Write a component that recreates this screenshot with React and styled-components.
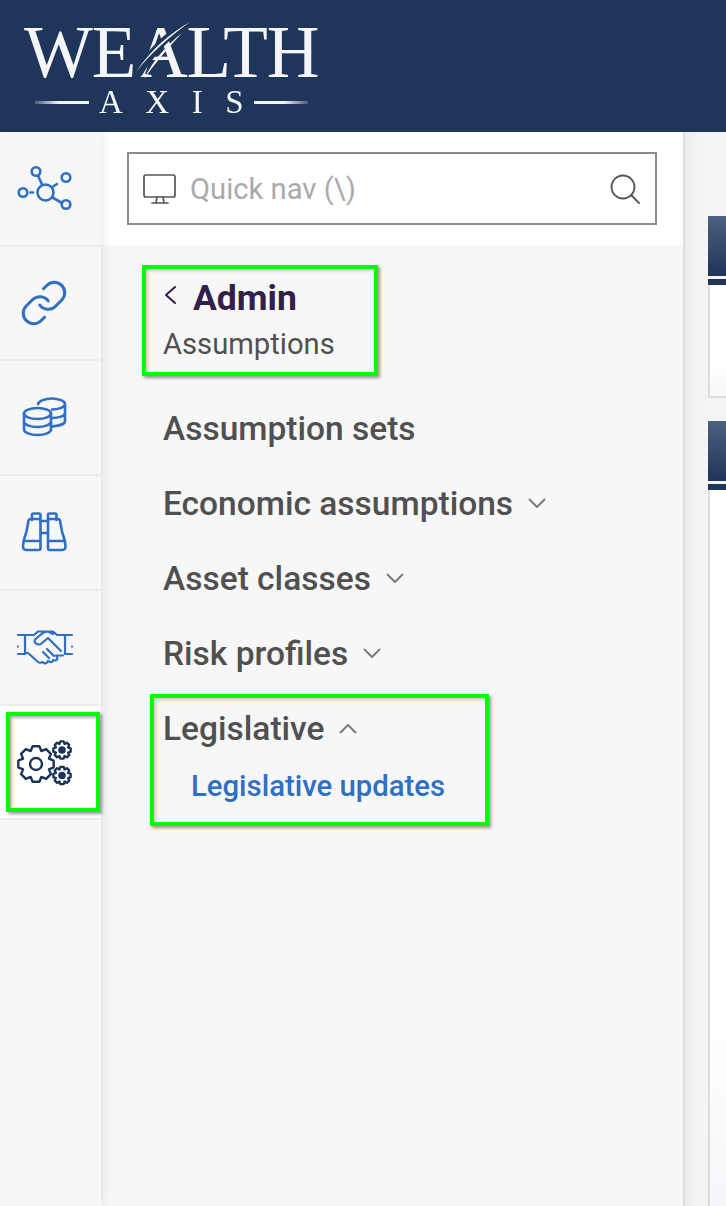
import React from "react";
import styled, { createGlobalStyle } from "styled-components";
import { Link as LinkIcon } from "lucide-react";

const Global = createGlobalStyle`
  html, body { margin: 0; padding: 0; height: 100%; }
  body { font-family: Roboto, "Liberation Sans", sans-serif; background: #f4f4f4; overflow: hidden; }
  #root { height: 100%; }
  * { box-sizing: border-box; }
`;

const Page = styled.div`
  width: 726px; height: 1206px; display: flex; flex-direction: column; overflow: hidden;
`;
const Header = styled.header`
  height: 132px; flex: none; background: #1f3559; padding: 16px 0 0 24px;
`;
const Logo = styled.div`
  position: relative; width: 292px; color: #f4f6f9; font-family: "Liberation Serif", serif; filter: blur(0.45px);
`;
const LogoWord = styled.div`
  font-size: 73px; line-height: 74px; height: 71px; white-space: nowrap; letter-spacing: -1.2px;
`;
const LogoSub = styled.div`
  display: flex; align-items: center; margin: 0 0 0 11px; height: 30px; gap: 10px;
`;
const LogoRule = styled.span`
  width: 54px; height: 3px; background: linear-gradient(${p => p.$dir}, #f4f6f9 55%, rgba(244,246,249,0.2));
`;
const LogoAxis = styled.span`
  font-size: 33px; line-height: 30px; letter-spacing: 22.5px; margin-right: -22.5px;
`;
const Swoosh = styled.svg`
  position: absolute; left: 100px; top: 0; width: 80px; height: 70px;
`;
const Body = styled.div`
  flex: 1; display: flex; min-height: 0;
`;
const Rail = styled.nav`
  width: 101px; flex: none; background: #f7f7f7; box-shadow: 3px 0 8px rgba(0,0,0,0.07); position: relative; z-index: 2;
`;
const RailItem = styled.div`
  height: ${p => p.$h}px; display: flex; align-items: center; padding-left: 15px;
  border-bottom: 2px solid #ededed; background: ${p => (p.$active ? "#fff" : "#f7f7f7")};
`;
const ActiveFrame = styled.div`
  width: 94px; height: 100px; margin-left: -9px; border: 4px solid #00ff00; padding-left: 5px;
  display: flex; align-items: center; box-shadow: 2px 2px 3px rgba(0,0,0,0.4), inset 2px 2px 3px rgba(0,0,0,0.3);
`;
const Panel = styled.aside`
  width: 584px; flex: none; background: #f7f7f7; border-right: 2px solid #dedede; position: relative; z-index: 1;
`;
const SearchBar = styled.div`
  height: 113px; background: #fff; padding: 20px 26px 0;
`;
const SearchBox = styled.div`
  width: 530px; height: 73px; border: 2px solid #8c8c8c; display: flex; align-items: center; padding: 0 15px 0 14px;
`;
const Placeholder = styled.span`
  flex: 1; margin-left: 13px; font-size: 29.2px; color: #aaaaaa;
`;
const NavList = styled.div`
  padding: 20px 0 0 41px;
`;
const Frame = styled.div`
  border: 4px solid #00ff00; box-shadow: 2px 2px 3px rgba(0,0,0,0.4), inset 2px 2px 3px rgba(0,0,0,0.18);
  width: ${p => p.$w}px; height: ${p => p.$h}px; margin-left: ${p => p.$ml || 0}px; padding-left: ${p => p.$pl}px;
`;
const TitleRow = styled.div`
  display: flex; align-items: center; height: 50px; margin-top: 4px; color: #33204a;
`;
const Title = styled.span`
  font-weight: 700; font-size: 35.5px; margin-left: 16px;
`;
const Subtitle = styled.div`
  font-size: 29.2px; color: #505050; line-height: 34px; margin-top: 4px;
`;
const Items = styled.div`
  padding: 15px 0 0 21px; height: 318px;
`;
const Item = styled.div`
  height: 75px; display: flex; align-items: center; font-size: 33.5px; font-weight: 500; color: #505050; gap: 15px;
`;
const FrameHead = styled(Item)`
  height: 60px;
`;
const SubLink = styled.div`
  font-size: 29.3px; font-weight: 500; color: #2f6fc4; margin: 8px 0 0 28px; line-height: 40px;
`;
const Content = styled.main`
  flex: 1; padding: 84px 0 0 23px; background: linear-gradient(90deg, #ececec, #f4f4f4 14px);
`;
const Card = styled.section`
  width: 100%; margin-bottom: 23px;
`;
const CardHead = styled.div`
  height: 60px; background: linear-gradient(#4c6080, #1f3559);
`;
const CardStrip = styled.div`
  height: 6px; margin-top: 3px; background: #1f3559;
`;
const CardBody = styled.div`
  height: ${p => p.$h}px; background: linear-gradient(#fff 75%, #f6f7fa); border-left: 2px solid #dcdcdc;
  border-bottom: ${p => (p.$open ? 0 : "2px solid #dcdcdc")};
`;

const BLUE = "#2f6fc4";
const NAVY = "#1c3358";

const IconSvg = styled.svg`
  width: 60px; height: 60px; flex: none; fill: none; stroke: ${p => p.$c || BLUE}; stroke-width: ${p => p.$sw || 2.6};
  stroke-linecap: round; stroke-linejoin: round;
`;
const Caret = styled.svg`
  flex: none; width: ${p => p.$w}px; height: ${p => p.$h}px; fill: none; stroke: ${p => p.$c}; stroke-width: ${p => p.$sw};
  stroke-linecap: round; stroke-linejoin: round; margin-top: ${p => p.$mt || 0}px;
`;
const CaretDown = () => (
  <Caret viewBox="0 0 18 11" $w={18} $h={11} $c="#777" $sw="1.800"><path d="M1.500 1.500 9 9l7.500-7.500" /></Caret>
);
const CaretUp = () => (
  <Caret viewBox="0 0 18 11" $w={18} $h={11} $c="#777" $sw="1.800"><path d="M1.500 9.500 9 2l7.500 7.500" /></Caret>
);
const CaretLeft = () => (
  <Caret viewBox="0 0 14 20" $w={14} $h={20} $c="#33204a" $sw="2" $mt={-6}><path d="M12 2 3 10l9 8" /></Caret>
);

const NetworkIcon = () => (
  <IconSvg viewBox="0 0 60 60">
    <circle cx="30.5" cy="33.5" r="8" />
    <circle cx="21" cy="12.5" r="4.300" /><circle cx="51" cy="18.500" r="4.300" />
    <circle cx="51" cy="45.500" r="4.300" /><circle cx="8" cy="33.500" r="4.300" />
    <path d="M27 25.500 23.200 17M38 27.500l4-2.500M37.500 38.500l9.500 5.500M15.500 33.500h2.500" />
  </IconSvg>
);

const CoinsIcon = () => (
  <IconSvg viewBox="0 0 60 60">
    <ellipse cx="22.500" cy="25.500" rx="13.500" ry="5.500" />
    <path d="M9 25.500v16c0 3 6 5.500 13.500 5.500S36 44.500 36 41.500v-16M9 33.500c0 3 6 5.500 13.500 5.500S36 36.500 36 33.500" />
    <path d="M23 16c1-3 7-5.500 13.500-5.500 7.500 0 13.500 2.500 13.500 5.500v17c0 2.500-5 5-14 5.500M37 21.500c7 0 13-2.500 13-5.500M37 30c7 0 13-2 13-5" />
  </IconSvg>
);

const BINOC = "M17 17v-5c0-1 .7-1.500 1.500-1.500h5.500c1 0 1.500.6 1.500 1.500v33.500c0 1-.8 1.500-1.500 1.500H11c-2 0-3-1.500-3-3.500 0-5 2-10 3.500-15l2-11c.3-1 1-1.500 2-1.500h10M8.500 38h17";
const BinocularsIcon = () => (
  <IconSvg viewBox="0 0 60 60">
    <path d={BINOC} />
    <g transform="matrix(-1 0 0 1 58.500 0)"><path d={BINOC} /></g>
    <path d="M25.500 18h7.500M25.500 30h7.500" />
  </IconSvg>
);

const HandshakeIcon = () => (
  <IconSvg viewBox="0 0 60 60" $sw="2.200">
    <path d="M3 17h7M10 17v19M10 36H3M57 17h-7M50 17v19M50 36h7" />
    <path d="M10 17h9l4-3.500h10l5 2.500M50 17h-8l-4-3.500h-5c-3 0-5 1-7 3l-6 5c-1 2 0 4 2 4.500 2 .800 4 .500 5-1l6-5 13 13M10 35h3l10 9c1 1 3 1 4 0l2 1c2 1 3 0 4-2l2 1c2 .500 3-1 3-2l2 .500c2 0 3-2 2-4l-1-1h7" />
    <path d="M32 31l7 7M28 34l6 6M3 28.500v.1M57 28.500v.1" />
  </IconSvg>
);

const gearPath = (cx, cy, ro, ri, teeth) => {
  const pts = [];
  const step = (Math.PI * 2) / teeth;
  for (let i = 0; i < teeth; i++) {
    const a = i * step - Math.PI / 2;
    [[-0.5, ri], [-0.24, ro], [0.24, ro], [0.5, ri]].forEach(([f, r]) => {
      pts.push(`${(cx + r * Math.cos(a + f * step)).toFixed(2)} ${(cy + r * Math.sin(a + f * step)).toFixed(2)}`);
    });
  }
  return `M${pts.join("L")}Z`;
};

const GearsIcon = () => (
  <IconSvg viewBox="0 0 60 60" $c={NAVY} $sw="2.400">
    <path d={gearPath(21, 32, 18, 14, 8)} />
    <circle cx="21" cy="32" r="6" />
    <path d={gearPath(47, 18, 8.800, 6.600, 8)} />
    <circle cx="47" cy="18" r="2.600" fill={NAVY} />
    <path d={gearPath(47, 43.500, 8.800, 6.600, 8)} />
    <circle cx="47" cy="43.500" r="2.600" fill={NAVY} />
  </IconSvg>
);

const GlyphSvg = styled.svg`
  width: ${p => p.$s}px; height: ${p => p.$s}px; flex: none; fill: none; stroke: #555; stroke-width: ${p => p.$sw};
  stroke-linecap: round; stroke-linejoin: round;
`;

export default function App() {
  return (
    <Page>
      <Global />
      <Header>
        <Logo>
          <LogoWord>WEALTH</LogoWord>
          <LogoSub>
            <LogoRule $dir="to left" />
            <LogoAxis>AXIS</LogoAxis>
            <LogoRule $dir="to right" />
          </LogoSub>
          <Swoosh viewBox="0 0 80 70">
            <path d="M66 5C50 16 30 34 16 58L10 62C22 38 44 16 66 5Z" fill="#1f3559" stroke="#1f3559" strokeWidth="5" />
            <path d="M66 6C48 16 28 32 12 56C26 38 46 20 66 6Z" fill="#f4f6f9" />
            <path d="M58 17C44 28 29 44 20 63C31 47 44 32 58 17Z" fill="#f4f6f9" />
          </Swoosh>
        </Logo>
      </Header>
      <Body>
        <Rail>
          <RailItem $h={115}><NetworkIcon /></RailItem>
          <RailItem $h={114}>
            <LinkIcon size={50} strokeWidth={1.45} color={BLUE} style={{ marginLeft: 4 }} />
          </RailItem>
          <RailItem $h={115}><CoinsIcon /></RailItem>
          <RailItem $h={115}><BinocularsIcon /></RailItem>
          <RailItem $h={115}><HandshakeIcon /></RailItem>
          <RailItem $h={114} $active>
            <ActiveFrame><GearsIcon /></ActiveFrame>
          </RailItem>
        </Rail>
        <Panel>
          <SearchBar>
            <SearchBox>
              <GlyphSvg viewBox="0 0 34 34" $s={34} $sw="1.700">
                <rect x="1" y="3" width="31" height="22" rx="2" />
                <path d="M14 25l-1 6M20 25l1 6M9 31h16" />
              </GlyphSvg>
              <Placeholder>Quick nav (\)</Placeholder>
              <GlyphSvg viewBox="0 0 30 30" $s={30} $sw="1.800">
                <circle cx="13" cy="13" r="11.500" />
                <path d="M21.500 21.500 29 29" />
              </GlyphSvg>
            </SearchBox>
          </SearchBar>
          <NavList>
            <Frame $w={236} $h={111} $pl={17}>
              <TitleRow>
                <CaretLeft />
                <Title>Admin</Title>
              </TitleRow>
              <Subtitle>Assumptions</Subtitle>
            </Frame>
            <Items>
              <Item>Assumption sets</Item>
              <Item>Economic assumptions <CaretDown /></Item>
              <Item>Asset classes <CaretDown /></Item>
              <Item>Risk profiles <CaretDown /></Item>
            </Items>
            <Frame $w={339} $h={132} $ml={8} $pl={9}>
              <FrameHead>Legislative <CaretUp /></FrameHead>
              <SubLink>Legislative updates</SubLink>
            </Frame>
          </NavList>
        </Panel>
        <Content>
          <Card>
            <CardHead />
            <CardStrip />
            <CardBody $h={113} />
          </Card>
          <Card>
            <CardHead />
            <CardStrip />
            <CardBody $h={720} $open />
          </Card>
        </Content>
      </Body>
    </Page>
  );
}
